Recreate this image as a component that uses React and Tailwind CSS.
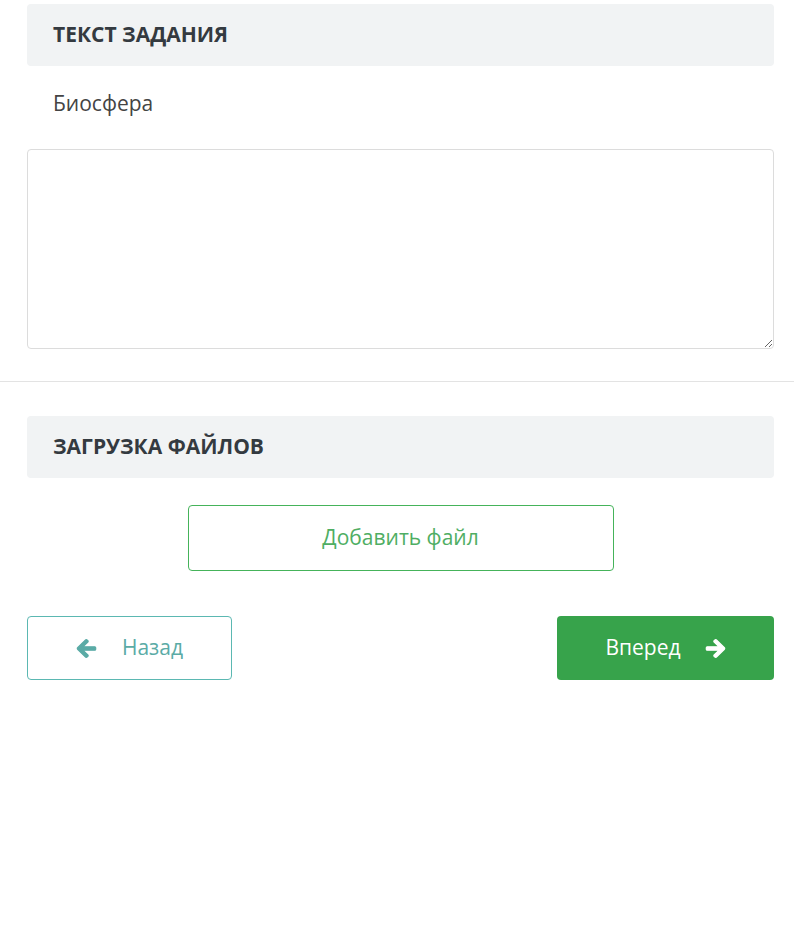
export default function App() {
  const font = { fontFamily: '"Open Sans", "Noto Sans", sans-serif' }

  return (
    <div className="min-h-[938px] bg-white text-[#343a40]" style={font}>
      <div className="pl-[27px] pr-[20px] pt-[4px]">
        <div className="bg-[#f1f3f4] rounded-[4px] h-[62px] flex items-center px-[26px]">
          <h2 className="text-[21px] font-bold uppercase text-[#343a40]">Текст задания</h2>
        </div>
        <p className="px-[26px] mt-[22px] text-[21px] text-[#444] leading-[30px]">Биосфера</p>
        <textarea
          className="mt-[31px] block w-full h-[200px] border border-[#dcdcdc] rounded-[4px] outline-none p-3"
        ></textarea>
      </div>

      <hr className="mt-[32px] border-0 border-t border-[#e3e3e3]" />

      <div className="pl-[27px] pr-[20px] pt-[34px]">
        <div className="bg-[#f1f3f4] rounded-[4px] h-[62px] flex items-center px-[26px]">
          <h2 className="text-[21px] font-bold uppercase text-[#343a40]">Загрузка файлов</h2>
        </div>

        <div className="flex justify-center mt-[27px]">
          <button className="w-[426px] h-[66px] border border-[#45b35a] rounded-[4px] text-[21px] text-[#4fae63] bg-white">
            Добавить файл
          </button>
        </div>

        <div className="flex justify-between mt-[45px]">
          <button className="w-[205px] h-[64px] border border-[#5bb8b2] rounded-[4px] bg-white flex items-center justify-center gap-[25px] text-[21px] text-[#5aaba6]">
            <svg viewBox="0 0 448 512" className="w-[21px] h-[21px] fill-[#5aaba6] stroke-[#5aaba6] stroke-[30]">
              <path d="M257.5 445.1l-22.2 22.2c-9.4 9.4-24.6 9.4-33.9 0L7 273c-9.4-9.4-9.4-24.6 0-33.9L201.4 44.7c9.4-9.4 24.6-9.4 33.9 0l22.2 22.2c9.5 9.5 9.3 25-.4 34.3L136.6 216H424c13.3 0 24 10.7 24 24v32c0 13.3-10.7 24-24 24H136.6l120.5 114.8c9.8 9.3 10 24.8.4 34.3z" />
            </svg>
            <span>Назад</span>
          </button>

          <button className="w-[217px] h-[64px] rounded-[4px] bg-[#37a34b] flex items-center justify-center gap-[24px] text-[21px] text-white">
            <span>Вперед</span>
            <svg viewBox="0 0 448 512" className="w-[21px] h-[21px] fill-white stroke-white stroke-[30]">
              <path d="M190.5 66.9l22.2-22.2c9.4-9.4 24.6-9.4 33.9 0L441 239c9.4 9.4 9.4 24.6 0 33.9L246.6 467.3c-9.4 9.4-24.6 9.4-33.9 0l-22.2-22.2c-9.5-9.5-9.3-25 .4-34.3L311.4 296H24c-13.3 0-24-10.7-24-24v-32c0-13.3 10.7-24 24-24h287.4L190.9 101.2c-9.8-9.3-10-24.8-.4-34.3z" />
            </svg>
          </button>
        </div>
      </div>
    </div>
  )
}
